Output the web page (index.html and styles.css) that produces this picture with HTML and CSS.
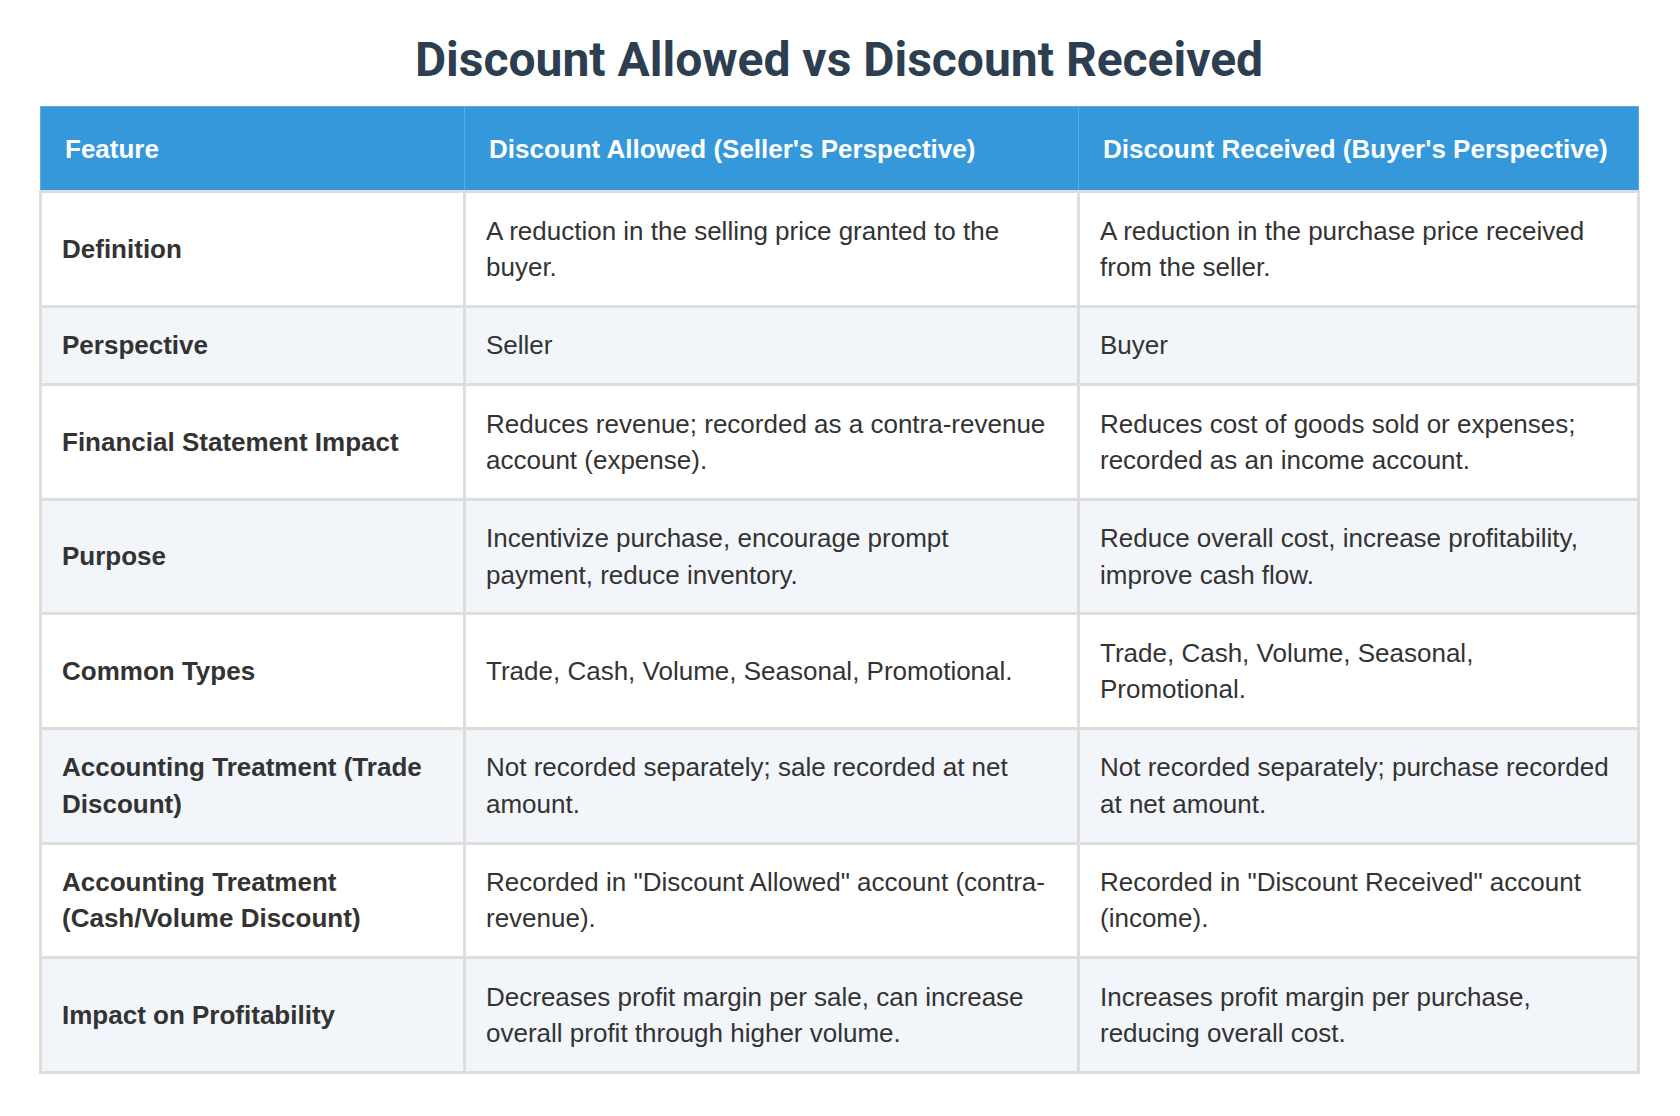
FILE: index.html
```html
<!DOCTYPE html>
<html lang="en">
<head>
<meta charset="utf-8">
<title>Discount Allowed vs Discount Received</title>
<link rel="stylesheet" href="styles.css">
</head>
<body>
<div class="page">
  <h1 class="title">Discount Allowed vs Discount Received</h1>
  <table class="compare">
    <colgroup>
      <col class="c1">
      <col class="c2">
      <col class="c3">
    </colgroup>
    <thead>
      <tr>
        <th>Feature</th>
        <th>Discount Allowed (Seller's Perspective)</th>
        <th>Discount Received (Buyer's Perspective)</th>
      </tr>
    </thead>
    <tbody>
      <tr>
        <td class="feat">Definition</td>
        <td>A reduction in the selling price granted to the buyer.</td>
        <td>A reduction in the purchase price received from the seller.</td>
      </tr>
      <tr>
        <td class="feat">Perspective</td>
        <td>Seller</td>
        <td>Buyer</td>
      </tr>
      <tr>
        <td class="feat">Financial Statement Impact</td>
        <td>Reduces revenue; recorded as a contra-revenue account (expense).</td>
        <td>Reduces cost of goods sold or expenses; recorded as an income account.</td>
      </tr>
      <tr>
        <td class="feat">Purpose</td>
        <td>Incentivize purchase, encourage prompt payment, reduce inventory.</td>
        <td>Reduce overall cost, increase profitability, improve cash flow.</td>
      </tr>
      <tr>
        <td class="feat">Common Types</td>
        <td>Trade, Cash, Volume, Seasonal, Promotional.</td>
        <td>Trade, Cash, Volume, Seasonal, Promotional.</td>
      </tr>
      <tr>
        <td class="feat">Accounting Treatment (Trade Discount)</td>
        <td>Not recorded separately; sale recorded at net amount.</td>
        <td>Not recorded separately; purchase recorded at net amount.</td>
      </tr>
      <tr>
        <td class="feat">Accounting Treatment (Cash/Volume Discount)</td>
        <td>Recorded in "Discount Allowed" account (contra-revenue).</td>
        <td>Recorded in "Discount Received" account (income).</td>
      </tr>
      <tr>
        <td class="feat">Impact on Profitability</td>
        <td>Decreases profit margin per sale, can increase overall profit through higher volume.</td>
        <td>Increases profit margin per purchase, reducing overall cost.</td>
      </tr>
    </tbody>
  </table>
</div>
</body>
</html>
```
FILE: styles.css
```css
html, body {
  margin: 0;
  padding: 0;
  background: #ffffff;
}

.page {
  padding: 32px 41px 0 39px;
  font-family: "Liberation Sans", Arial, sans-serif;
  color: #333333;
}

.title {
  margin: 0 0 18px 0;
  font-family: Roboto, "Liberation Sans", Arial, sans-serif;
  font-weight: 700;
  font-size: 48px;
  line-height: 56px;
  color: #2c3e50;
  text-align: center;
}

.compare {
  width: 1598px;
  border-collapse: collapse;
  table-layout: fixed;
  font-size: 26px;
  line-height: 36.4px;
}

.c1 { width: 424px; }
.c2 { width: 614px; }
.c3 { width: 560px; }

.compare th {
  background: #3498db;
  color: #ffffff;
  font-weight: 700;
  text-align: left;
  padding: 23.5px 24px;
  border: 1px solid #58aae2;
}

.compare td {
  padding: 19.4px 20px;
  border: 3px solid #dddddd;
  vertical-align: middle;
  text-align: left;
}

.compare tbody tr:nth-child(even) td {
  background: #f2f5f9;
}

.compare td.feat {
  font-weight: 700;
}
```
